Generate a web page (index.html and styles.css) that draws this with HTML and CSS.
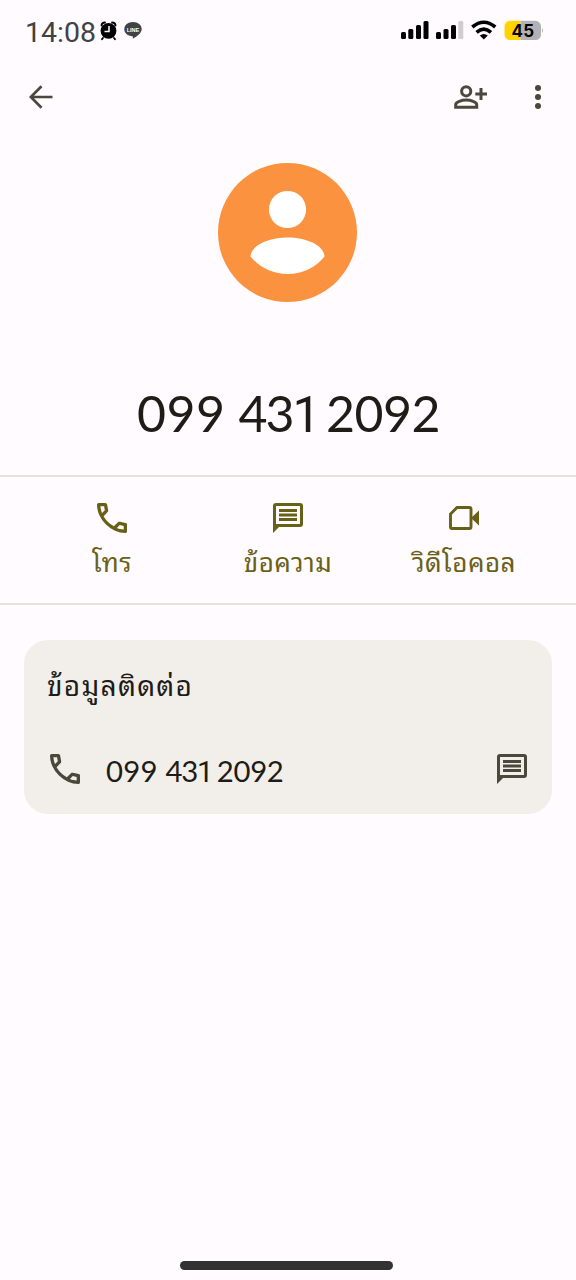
FILE: index.html
```html
<!DOCTYPE html>
<html lang="th">
<head>
<meta charset="utf-8">
<meta name="viewport" content="width=device-width">
<title>099 431 2092</title>
<link rel="stylesheet" href="styles.css">
</head>
<body>
<svg class="defs" aria-hidden="true">
  <symbol id="call" viewBox="3 3 18 18"><path d="M19.95 21q-3.125 0-6.175-1.362-3.05-1.363-5.55-3.863-2.5-2.5-3.862-5.55Q3 7.175 3 4.05q0-.45.3-.75t.75-.3H8.1q.35 0 .625.238.275.237.325.562l.65 3.5q.05.4-.025.675-.075.275-.275.475L6.975 10.9q.5.925 1.187 1.787.688.863 1.513 1.663.775.775 1.625 1.438.85.662 1.8 1.212l2.35-2.35q.225-.225.588-.338.362-.112.712-.062l3.45.7q.35.1.575.363.225.262.225.587v4.05q0 .45-.3.75t-.75.3ZM6.025 9l1.65-1.65L7.25 5H5.025q.125 1.025.35 2.025.225 1 .65 1.975Zm8.95 8.95q.975.425 1.987.675 1.013.25 2.038.325v-2.2l-2.35-.475Z"/></symbol>
  <symbol id="chat" viewBox="0 0 30 30"><path fill-rule="evenodd" d="M3 0h24a3 3 0 0 1 3 3v18a3 3 0 0 1-3 3H6l-6 6V3a3 3 0 0 1 3-3zM3 3v18h24V3z"/><path d="M6 6h18v3H6zM6 10.500h18v3H6zM6 15h18v3H6z"/></symbol>
</svg>
<div class="screen">
  <header class="status">
    <span class="clock">14:08</span>
    <svg class="alarm" viewBox="0 0 18 20" width="18" height="20"><path d="M3 17l-1 1.200M14 17l1 1.200M1.500 4.500Q1.500 1.500 5 1.500M15.500 4.500Q15.500 1.500 12 1.500" fill="none" stroke="#000" stroke-width="1.800" stroke-linecap="round"/><circle cx="8.500" cy="9.800" r="7.900"/><path d="M9 5v5.500H4.500" fill="none" stroke="#fff" stroke-width="1.500"/></svg>
    <svg class="line" viewBox="0 0 18 17" width="18" height="17"><path d="M9 0c5 0 8.700 3.100 8.700 7.200 0 3.500-4.400 7-9 9.600.3-1.300.6-2.300-.5-2.500C3.700 13.800.3 11 .3 7.200.3 3.100 4 0 9 0z" fill="#414244"/><text x="9" y="9.700" text-anchor="middle" fill="#fff" class="line-text">LINE</text></svg>
    <svg class="signals" viewBox="0 0 142 22" width="142" height="22">
      <g><rect x="0" y="12" width="5" height="7" rx="1.500"/><rect x="7.300" y="9" width="5" height="10" rx="1.500"/><rect x="15" y="5" width="5" height="14" rx="1.500"/><rect x="22.500" y="1" width="5" height="18" rx="1.500"/><rect x="35" y="12" width="5" height="7" rx="1.500"/><rect x="42.500" y="9" width="5" height="10" rx="1.500"/><rect x="50" y="5" width="5" height="14" rx="1.500"/></g>
      <rect x="57.300" y="1" width="5" height="18" rx="1.500" fill="#cfcdd0"/>
      <path d="M71.300 7Q82.800-2.500 94.300 7M75.600 12.300Q82.800 6 90 12.300" fill="none" stroke="#000" stroke-width="3.600"/><path d="M78.800 15.500Q82.800 12.300 86.800 15.500L82.800 19.500z"/>
      <path d="M109 .8h10.500v19.200H109a5.500 5.500 0 0 1-5.500-5.500V6.300A5.500 5.500 0 0 1 109 .8z" fill="#ffd400"/><path d="M119.500 .8h15a5.500 5.500 0 0 1 5.500 5.500v8.200a5.500 5.500 0 0 1-5.500 5.500h-15z" fill="#b2b1b3"/><path d="M141 8q2 2.500 0 5z" fill="#b2b1b3"/>
      <text x="122" y="16.600" text-anchor="middle" class="battery-text">45</text>
    </svg>
  </header>
  <nav class="appbar">
    <svg class="back" viewBox="0 0 24 24" width="24" height="24"><path d="M12.500 1.200L1.800 12l10.700 10.800M1.800 12H23.500" fill="none" stroke="#4a473b" stroke-width="2.700"/></svg>
    <svg class="add" viewBox="0 0 34 24" width="34" height="24" fill="none" stroke="#4a473b" stroke-width="3"><circle cx="12.200" cy="6.300" r="4.600"/><path d="M1.700 22.200v-2.500c0-2.700 6-4.600 10.500-4.600s10.500 1.900 10.500 4.600v2.500zM27 3v12M21.300 9H33"/></svg>
    <svg class="more" viewBox="0 0 8 24" width="8" height="24" fill="#4a473b"><circle cx="4" cy="3" r="3"/><circle cx="4" cy="12" r="3"/><circle cx="4" cy="21" r="3"/></svg>
  </nav>
  <svg class="avatar" viewBox="0 0 139 139" width="139" height="139"><circle cx="69.500" cy="69.500" r="69.500" fill="#fb923f"/><circle cx="69.500" cy="46.500" r="18.600" fill="#fff"/><path d="M32.500 93.500C33 82 51 74.500 69.500 74.500S106 82 106.500 93.500C98 104 85 111 69.500 111S41 104 32.500 93.500z" fill="#fff"/></svg>
  <h1 class="number"><span class="g1">099</span><span class="g2">43<i>1</i></span><span class="g3">2092</span></h1>
  <section class="actions">
    <div class="action"><svg width="30" height="30"><use href="#call"/></svg><span>โทร</span></div>
    <div class="action"><svg width="30" height="30"><use href="#chat"/></svg><span>ข้อความ</span></div>
    <div class="action"><svg width="30" height="30" viewBox="0 0 30 30"><path d="M8 4.500H20.500a1.500 1.500 0 0 1 1.500 1.500V24a1.500 1.500 0 0 1-1.500 1.500H3A1.500 1.500 0 0 1 1.500 24V11z" fill="none" stroke="#696018" stroke-width="2.900"/><path d="M22.500 14.500L30 7.500v15l-7.500-7z"/></svg><span>วิดีโอคอล</span></div>
  </section>
  <section class="card">
    <h2>ข้อมูลติดต่อ</h2>
    <div class="row"><svg width="30" height="30"><use href="#call"/></svg><div class="number small"><span class="g1">099</span><span class="g2">43<i>1</i></span><span class="g3">2092</span></div><svg class="sms" width="30" height="30"><use href="#chat"/></svg></div>
  </section>
  <div class="home"></div>
</div>
</body>
</html>
```
FILE: styles.css
```css
* { box-sizing: border-box; }
body { margin: 0; background: #fffbff; font-family: Lato, "Noto Sans Thai Looped", Loma, Garuda, Waree, "Noto Sans Thai", "Noto Sans", sans-serif; }
svg { display: block; flex: none; }
.defs { width: 0; height: 0; position: absolute; }
.screen { height: 1280px; display: flex; flex-direction: column; overflow: hidden; }
.status { height: 60px; padding: 0 33px 0 25px; display: flex; align-items: flex-start; }
.clock { width: 75px; padding-top: 16px; font: 28.5px/34px Roboto, sans-serif; color: #414244; white-space: nowrap; }
.alarm { margin-top: 21px; }
.line { margin: 22px 0 0 6px; }
.line-text { font: bold 5.5px "Liberation Sans", sans-serif; }
.signals { margin: 20px 0 0 auto; }
.battery-text { font: bold 17px Inter, sans-serif; letter-spacing: .3px; }
.appbar { height: 73px; padding: 0 34px 0 29px; display: flex; align-items: center; }
.add { margin-left: auto; margin-right: 46px; }
.avatar { margin: 30px 0 0 218px; }
.number { margin: 81px 0 0 137px; display: flex; height: 61px; font-size: 50px; line-height: 60px; font-weight: 400; color: #1d1c17; white-space: nowrap; }
.number .g1 { width: 2.03em; letter-spacing: .01em; }
.number .g2 { width: 1.75em; letter-spacing: -.04em; }
.number .g3 { letter-spacing: -.01em; }
.number i { font-style: normal; font-family: Roboto, sans-serif; }
.actions { margin-top: 31px; height: 130px; border-top: 2px solid #e6e2d9; border-bottom: 2px solid #e6e2d9; padding: 0 24px; display: flex; color: #696018; fill: #696018; }
.action { flex: 1; display: flex; flex-direction: column; align-items: center; padding-top: 26px; }
.action span { margin-top: 11px; font-size: 26px; line-height: 36px; letter-spacing: .5px; white-space: nowrap; }
.card { margin: 35px 24px 0; height: 174px; border-radius: 24px; background: #f2eeea; padding: 27px 25px 0 26px; }
.card h2 { margin: 0 0 0 -3px; font-size: 28px; line-height: 36px; font-weight: 400; letter-spacing: 1.3px; color: #1d1c17; white-space: nowrap; }
.row { display: flex; margin-top: 51px; fill: #4a473b; align-items: flex-start; }
.small { margin: -1px 0 0 26px; font-size: 29.3px; height: 36px; line-height: 36px; }
.sms { margin-left: auto; }
.home { margin: auto 0 10px 180px; width: 213px; height: 9px; border-radius: 5px; background: #323232; }
```
